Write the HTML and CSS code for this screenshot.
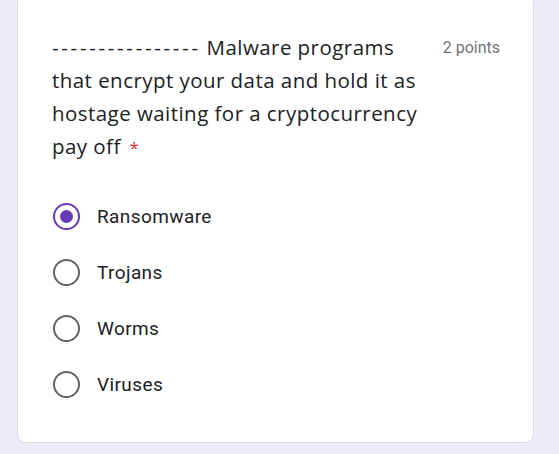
FILE: index.html
```html
<!DOCTYPE html>
<html>
<head>
<meta charset="utf-8">
<link rel="stylesheet" href="styles.css">
</head>
<body>
<div class="card">
  <div class="header">
    <div class="question"><span class="dashes">----------------</span> Malware programs that encrypt your data and hold it as hostage waiting for a cryptocurrency pay off <span class="req">*</span></div>
    <div class="points">2 points</div>
  </div>
  <div class="options">
    <label class="option"><span class="radio checked"></span><span class="label">Ransomware</span></label>
    <label class="option"><span class="radio"></span><span class="label">Trojans</span></label>
    <label class="option"><span class="radio"></span><span class="label">Worms</span></label>
    <label class="option"><span class="radio"></span><span class="label">Viruses</span></label>
  </div>
</div>
</body>
</html>
```
FILE: styles.css
```css
html, body {
  margin: 0;
  padding: 0;
  background: #efebf8;
  height: 100%;
}
body {
  padding: 0 24px 0 17px;
}
.card {
  width: 517px;
  margin-top: -6px;
  box-sizing: border-box;
  background: #fff;
  border-radius: 8px;
  border: 1px solid #dadce0;
  padding: 36px 33px 30px 34px;
}
.header {
  display: flex;
  align-items: flex-start;
}
.question {
  width: 380px;
  flex: none;
  font-family: "Open Sans", sans-serif;
  font-size: 20.5px;
  letter-spacing: 0.45px;
  line-height: 33px;
  color: #202124;
}
.dashes {
  letter-spacing: 2.7px;
}
.req {
  color: #d93025;
  font-size: 17px;
  margin-left: 3px;
}
.points {
  flex: none;
  white-space: nowrap;
  margin-left: auto;
  font-family: Roboto, sans-serif;
  font-size: 16px;
  line-height: 33px;
  color: #70757a;
}
.options {
  margin-top: 24px;
  display: flex;
  flex-direction: column;
}
.option {
  display: flex;
  align-items: center;
  height: 56px;
  padding-left: 1px;
}
.radio {
  width: 27px;
  height: 27px;
  box-sizing: border-box;
  border: 2.5px solid #5f6368;
  border-radius: 50%;
  display: flex;
  align-items: center;
  justify-content: center;
  flex: none;
}
.radio.checked {
  border-color: #673ab7;
}
.radio.checked::after {
  content: "";
  width: 13px;
  height: 13px;
  border-radius: 50%;
  background: #673ab7;
}
.label {
  margin-left: 17px;
  font-family: Roboto, sans-serif;
  font-size: 19px;
  letter-spacing: 0.4px;
  color: #202124;
}
```
